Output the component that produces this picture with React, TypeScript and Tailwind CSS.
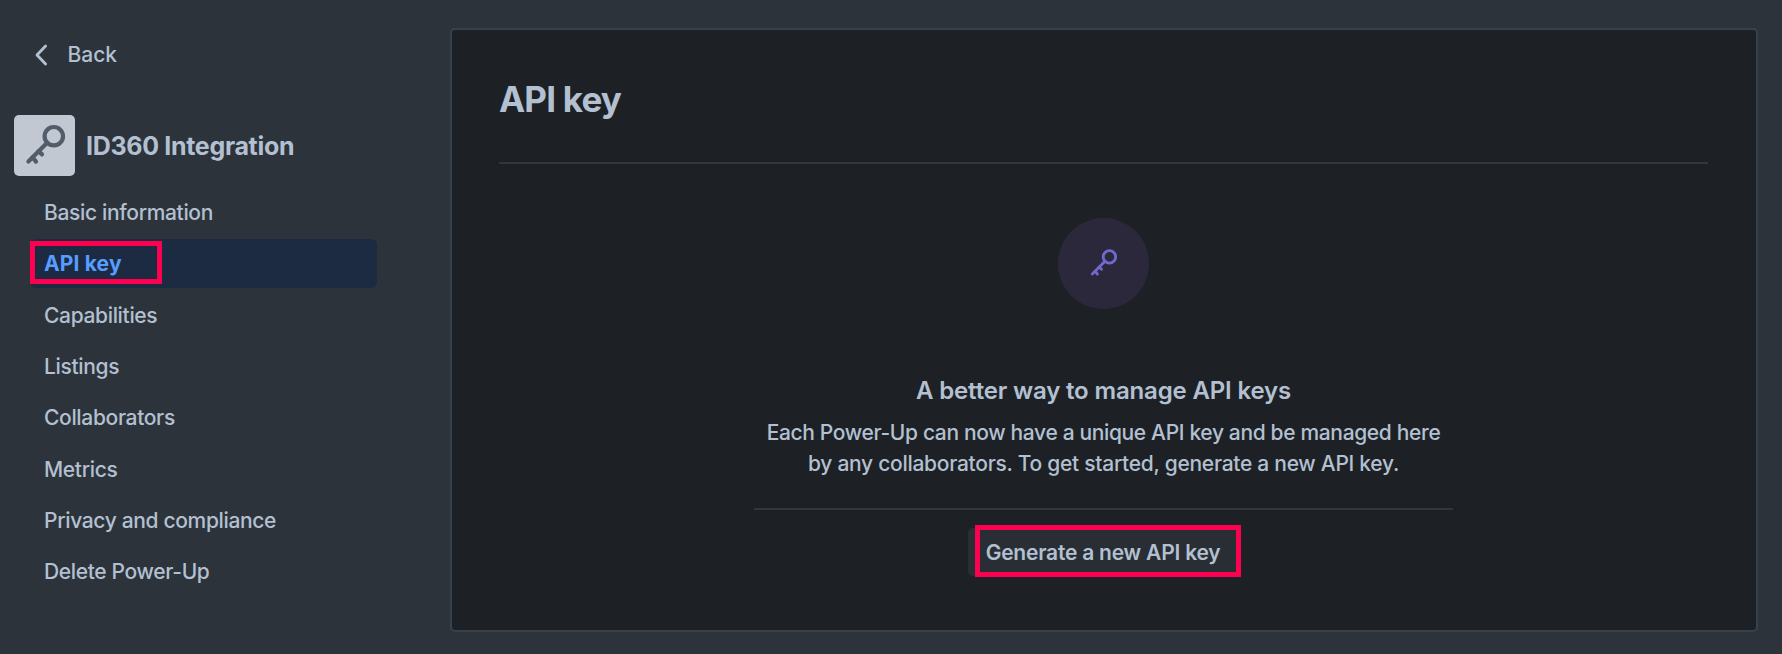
import clsx from "clsx"

interface NavItem {
  label: string
  active?: boolean
}

const navItems: NavItem[] = [
  { label: "Basic information" },
  { label: "API key", active: true },
  { label: "Capabilities" },
  { label: "Listings" },
  { label: "Collaborators" },
  { label: "Metrics" },
  { label: "Privacy and compliance" },
  { label: "Delete Power-Up" },
]

function KeyIcon({ className }: { className?: string }) {
  return (
    <svg
      viewBox="0 0 40 40"
      fill="none"
      stroke="currentColor"
      strokeWidth="4.2"
      strokeLinecap="round"
      strokeLinejoin="round"
      className={className}
    >
      <circle cx="28.8" cy="10.2" r="9.2" />
      <path d="M22.2 16.8L3.4 35.4" />
      <path d="M7.6 31.4L11 35.6" />
      <path d="M13.6 25.2L17 28.4" />
    </svg>
  )
}

function Sidebar() {
  return (
    <aside className="flex w-[377px] shrink-0 flex-col">
      <a className="mt-[39px] ml-[34px] flex h-8 items-center text-[21px] font-medium">
        <svg
          viewBox="0 0 14 22"
          fill="none"
          stroke="currentColor"
          strokeWidth="2.8"
          strokeLinecap="round"
          strokeLinejoin="round"
          className="mr-[19.5px] h-[22px] w-3.5"
        >
          <path d="M11.6 2L3 11L11.6 20" />
        </svg>
        Back
      </a>

      <div className="mt-11 ml-3.5 flex items-center">
        <div className="flex h-[61px] w-[61px] items-center justify-center rounded-[5px] bg-[#c1c8d2] text-[#535c69]">
          <KeyIcon className="h-10 w-10 overflow-visible" />
        </div>
        <h2 className="mt-0.5 ml-[11px] text-[25px] font-bold tracking-[-0.32px]">ID360 Integration</h2>
      </div>

      <nav className="mt-3 ml-[30px] flex flex-col">
        {navItems.map((item) => (
          <div key={item.label} className="h-[51.4px]">
            <a
              className={clsx(
                "relative flex h-[49px] items-center rounded-md pl-3.5 text-[21px]",
                item.active
                  ? "bg-[#1c2b41] font-bold tracking-[0.15px] text-[#579dff]"
                  : "font-medium tracking-[-0.34px]"
              )}
            >
              {item.label}
              {item.active && (
                <span className="absolute top-[2px] left-0 h-[43px] w-[132px] border-[5px] border-[#ff0050]" />
              )}
            </a>
          </div>
        ))}
      </nav>
    </aside>
  )
}

function ApiKeyPanel() {
  return (
    <main className="mt-7 ml-[73px] flex h-[604px] w-[1308px] flex-col rounded-[5px] border-2 border-[#38414a] bg-[#1d2125] pr-12 pl-[47px]">
      <h1 className="mt-[47px] h-11 text-[35px] leading-[44px] font-bold tracking-[-0.8px]">API key</h1>
      <hr className="mt-[41px] border-t-2 border-[#2f363e]" />

      <section className="mx-auto flex w-[699px] flex-col items-center text-center">
        <div className="mt-[54px] mr-px flex h-[91px] w-[91px] items-center justify-center rounded-full bg-[#2b283b] text-[#716acc]">
          <KeyIcon className="h-[27px] w-[27px] overflow-visible" />
        </div>
        <h3 className="mt-[66px] h-8 text-2xl leading-8 font-semibold tracking-[-0.16px]">
          A better way to manage API keys
        </h3>
        <p className="mt-[11px] text-[21px] leading-[30.5px] font-medium">
          <span className="block tracking-[-0.35px]">
            Each Power-Up can now have a unique API key and be managed here
          </span>
          <span className="block tracking-[-0.28px]">
            by any collaborators. To get started, generate a new API key.
          </span>
        </p>
        <hr className="mt-[29px] w-full border-t-2 border-[#2f363e]" />
        <button className="relative mt-[18px] mr-px h-12 w-[271px] rounded-[5px] bg-[#282e33] pt-0.5 text-[21px] font-semibold tracking-[-0.22px]">
          Generate a new API key
          <span className="absolute top-[-3px] left-[7px] h-[52px] w-[266px] border-[5px] border-[#ff0050]" />
        </button>
      </section>
    </main>
  )
}

export default function App() {
  return (
    <div className="flex h-[654px] w-[1782px] overflow-hidden bg-[#2c333a] font-['Inter',sans-serif] text-[#b3c0d1]">
      <Sidebar />
      <ApiKeyPanel />
    </div>
  )
}
